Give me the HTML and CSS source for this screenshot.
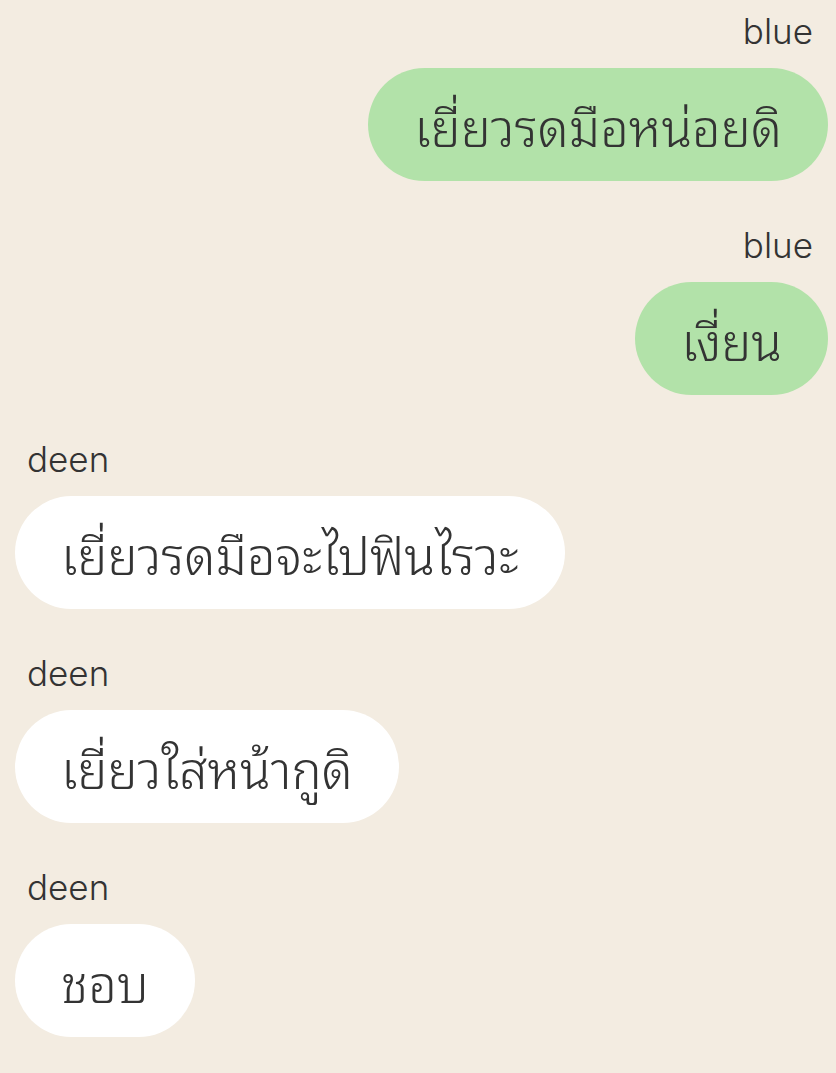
FILE: index.html
```html
<!DOCTYPE html>
<html lang="th">
<head>
<meta charset="utf-8">
<link rel="stylesheet" href="styles.css">
</head>
<body>
<div class="chat">
  <div class="msg me">
    <div class="name">blue</div>
    <div class="bubble">เยี่ยวรดมือหน่อยดิ</div>
  </div>
  <div class="msg me">
    <div class="name">blue</div>
    <div class="bubble">เงี่ยน</div>
  </div>
  <div class="msg them">
    <div class="name">deen</div>
    <div class="bubble">เยี่ยวรดมือจะไปฟินไรวะ</div>
  </div>
  <div class="msg them">
    <div class="name">deen</div>
    <div class="bubble">เยี่ยวใส่หน้ากูดิ</div>
  </div>
  <div class="msg them">
    <div class="name">deen</div>
    <div class="bubble">ชอบ</div>
  </div>
</div>
</body>
</html>
```
FILE: styles.css
```css
html, body {
  margin: 0;
  padding: 0;
  background: #f3ece1;
}
body {
  width: 836px;
  height: 1073px;
  overflow: hidden;
}
.chat {
  display: flex;
  flex-direction: column;
  gap: 44px;
  padding: 11px 8px 0 15px;
}
.msg {
  display: flex;
  flex-direction: column;
  gap: 17px;
}
.msg.me {
  align-items: flex-end;
}
.msg.them {
  align-items: flex-start;
}
.name {
  font-family: "Inter", "Liberation Sans", sans-serif;
  font-size: 35px;
  font-weight: 300;
  line-height: 40px;
  color: #333;
}
.me .name {
  padding-right: 15px;
}
.them .name {
  padding-left: 12px;
}
.bubble {
  font-family: "Noto Sans Thai Looped", "Noto Sans Thai", sans-serif;
  font-size: 50.5px;
  font-weight: 350;
  height: 113px;
  line-height: 113px;
  padding: 0 46px;
  border-radius: 57px;
  color: #333;
  white-space: nowrap;
  box-sizing: border-box;
}
.me .bubble {
  background: #b2e2a9;
}
.them .bubble {
  background: #ffffff;
}
```
